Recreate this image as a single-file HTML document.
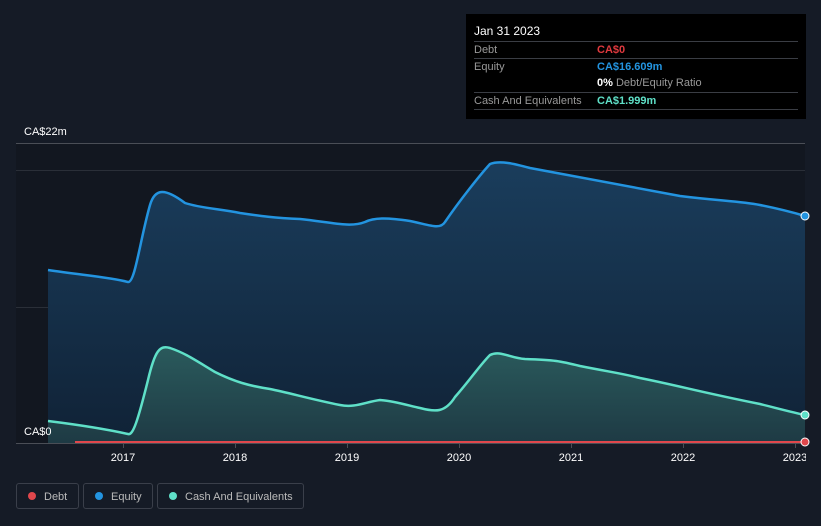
<!DOCTYPE html>
<html><head><meta charset="utf-8"><style>
body{margin:0;width:821px;height:526px;background:#151b26;font-family:"Liberation Sans",sans-serif;overflow:hidden;position:relative}
.tt{position:absolute;left:466px;top:14px;width:340px;height:105px;background:#000;}
.tt .h{position:absolute;left:8px;top:10px;color:#fff;font-size:12px}
.row{position:absolute;left:8px;width:324px;border-top:1px solid #3a3d44;height:17px;font-size:11px;color:#999}
.row span{position:absolute;left:123px;top:2px;font-weight:bold}
.row .l{position:absolute;left:0;top:2px}
.leg{position:absolute;top:483px;height:26px;border:1px solid #3a3f4a;border-radius:3px;color:#bbb;font-size:11px;line-height:26px;box-sizing:border-box}
.leg i{display:inline-block;width:8px;height:8px;border-radius:50%;margin:0 8px 0 11px;vertical-align:-0px}
</style></head><body>
<svg width="821" height="526" style="position:absolute;left:0;top:0">
<defs>
<linearGradient id="ge" x1="0" y1="0" x2="0" y2="1"><stop offset="0" stop-color="#1a3d5c"/><stop offset="1" stop-color="#102236"/></linearGradient>
<linearGradient id="gc" x1="0" y1="0" x2="0" y2="1"><stop offset="0" stop-color="#2a5a5c"/><stop offset="1" stop-color="#1e3a44"/></linearGradient>
</defs>
<rect x="16" y="143" width="789" height="300" fill="#121720"/>
<line x1="16" y1="143.5" x2="805" y2="143.5" stroke="#4a4e56"/>
<line x1="16" y1="170.5" x2="805" y2="170.5" stroke="#2a2f38"/>
<line x1="16" y1="307.5" x2="805" y2="307.5" stroke="#2a2f38"/>
<path d="M48,270 C80,275 110,277 128,282 C135,283 140,240 150,205 C155,188 165,188 185,203 C200,208 220,209 240,213 C260,216 275,218 300,219 C330,222 350,228 365,222 C375,217 390,218 410,221 C430,225 440,230 445,222 C460,200 480,175 490,164 C500,160 515,164 530,168 C570,175 620,185 680,196 C720,201 740,201 760,205 C780,209 795,213 805,216 L805,443 L48,443 Z" fill="url(#ge)"/>
<path d="M48,421 C80,425 110,430 128,434 C133,436 138,420 148,380 C155,350 160,345 170,348 C185,353 195,360 215,372 C235,382 250,386 270,389 C290,393 310,399 340,405 C355,408 365,402 380,400 C395,401 410,406 420,408 C435,412 445,413 455,397 C470,380 480,365 490,355 C500,350 510,358 525,359 C555,360 560,361 580,366 C610,372 620,373 640,378 C680,386 700,392 760,404 C780,409 795,413 805,415 L805,443 L48,443 Z" fill="url(#gc)"/>
<path d="M48,270 C80,275 110,277 128,282 C135,283 140,240 150,205 C155,188 165,188 185,203 C200,208 220,209 240,213 C260,216 275,218 300,219 C330,222 350,228 365,222 C375,217 390,218 410,221 C430,225 440,230 445,222 C460,200 480,175 490,164 C500,160 515,164 530,168 C570,175 620,185 680,196 C720,201 740,201 760,205 C780,209 795,213 805,216" fill="none" stroke="#2394e0" stroke-width="2.5"/>
<path d="M48,421 C80,425 110,430 128,434 C133,436 138,420 148,380 C155,350 160,345 170,348 C185,353 195,360 215,372 C235,382 250,386 270,389 C290,393 310,399 340,405 C355,408 365,402 380,400 C395,401 410,406 420,408 C435,412 445,413 455,397 C470,380 480,365 490,355 C500,350 510,358 525,359 C555,360 560,361 580,366 C610,372 620,373 640,378 C680,386 700,392 760,404 C780,409 795,413 805,415" fill="none" stroke="#5fe0c8" stroke-width="2.5"/>
<line x1="75" y1="442" x2="805" y2="442" stroke="#e0474c" stroke-width="2"/>
<line x1="16" y1="443.5" x2="805" y2="443.5" stroke="#4a4e56"/>
<g stroke="#4a4e56"><line x1="123.5" y1="443" x2="123.5" y2="448"/><line x1="235.5" y1="443" x2="235.5" y2="448"/><line x1="347.5" y1="443" x2="347.5" y2="448"/><line x1="459.5" y1="443" x2="459.5" y2="448"/><line x1="571.5" y1="443" x2="571.5" y2="448"/><line x1="683.5" y1="443" x2="683.5" y2="448"/><line x1="795.5" y1="443" x2="795.5" y2="448"/></g>
<circle cx="805" cy="216" r="4" fill="#2394e0" stroke="#fff" stroke-width="1"/>
<circle cx="805" cy="415" r="4" fill="#5fe0c8" stroke="#fff" stroke-width="1"/>
<circle cx="805" cy="442" r="4" fill="#e0474c" stroke="#fff" stroke-width="1"/>
<g fill="#fff" font-size="11" font-family="Liberation Sans" text-anchor="middle">
<text x="123" y="461">2017</text><text x="235" y="461">2018</text><text x="347" y="461">2019</text><text x="459" y="461">2020</text><text x="571" y="461">2021</text><text x="683" y="461">2022</text><text x="795" y="461">2023</text>
<text x="24" y="135" text-anchor="start">CA$22m</text>
<text x="24" y="435" text-anchor="start">CA$0</text>
</g>
<rect x="806" y="448" width="15" height="20" fill="#151b26"/>
</svg>
<div class="tt"><div class="h">Jan 31 2023</div>
<div class="row" style="top:27px"><div class="l">Debt</div><span style="color:#e0393e">CA$0</span></div>
<div class="row" style="top:44px"><div class="l">Equity</div><span style="color:#2394e0">CA$16.609m</span></div>
<div class="row" style="top:61px;border-top:none"><span style="color:#fff">0% <b style="color:#999;font-weight:normal">Debt/Equity Ratio</b></span></div>
<div class="row" style="top:78px"><div class="l">Cash And Equivalents</div><span style="color:#5fe0c8">CA$1.999m</span></div>
<div class="row" style="top:95px;height:0"></div>
</div>
<div class="leg" style="left:16px;width:63px"><i style="background:#e0474c"></i>Debt</div>
<div class="leg" style="left:83px;width:70px"><i style="background:#2394e0"></i>Equity</div>
<div class="leg" style="left:157px;width:147px"><i style="background:#5fe0c8"></i>Cash And Equivalents</div>
</body></html>
